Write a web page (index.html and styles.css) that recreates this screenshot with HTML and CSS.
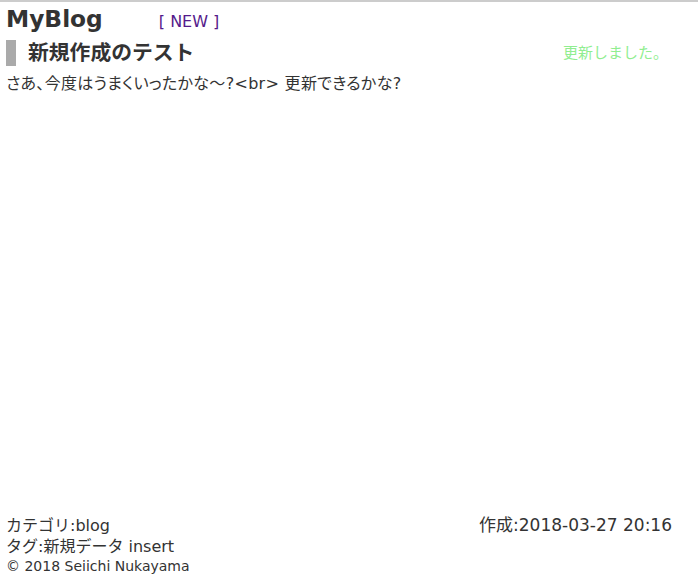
FILE: index.html
```html
<!DOCTYPE html>
<html lang="ja">
<head>
<meta charset="utf-8">
<title>MyBlog</title>
<link rel="stylesheet" href="styles.css">
</head>
<body>
<div class="page">
  <header class="site-header">
    <h1 class="site-title">MyBlog</h1>
    <span class="new-link">[ <a href="#new">NEW</a> ]</span>
  </header>
  <main class="content">
    <div class="post-head">
      <h2 class="post-title">新規作成のテスト</h2>
      <span class="notice">更新しました。</span>
    </div>
    <p class="post-body">さあ、今度はうまくいったかな～?&lt;br&gt; 更新できるかな?</p>
  </main>
  <footer class="post-foot">
    <div class="meta-row">
      <span>カテゴリ:blog</span>
      <span class="created">作成:2018-03-27 20:16</span>
    </div>
    <div class="meta-row">タグ:新規データ insert</div>
    <div class="copy">© 2018 Seiichi Nukayama</div>
  </footer>
</div>
</body>
</html>
```
FILE: styles.css
```css
html, body {
  margin: 0;
  padding: 0;
  height: 100%;
}
body {
  font-family: "DejaVu Sans", "Noto Sans CJK JP", sans-serif;
  font-size: 16px;
  color: #333;
  background: #fff;
  border-top: 2px solid #ccc;
  box-sizing: border-box;
}
.page {
  display: flex;
  flex-direction: column;
  min-height: calc(100vh - 2px);
  padding: 0 6px;
  box-sizing: border-box;
}
.site-header {
  display: flex;
  align-items: baseline;
  gap: 56px;
  height: 38px;
}
.site-title {
  margin: 0;
  font-size: 23.3px;
  font-weight: bold;
  line-height: 34px;
}
.new-link {
  color: #551a8b;
}
.new-link a {
  color: #551a8b;
  text-decoration: none;
}
.post-head {
  display: flex;
  align-items: center;
  justify-content: space-between;
  padding-right: 24px;
}
.post-title {
  margin: 0;
  font-size: 20.8px;
  font-weight: bold;
  line-height: 26px;
  border-left: 10px solid #aaa;
  padding-left: 12px;
}
.notice {
  color: #90ee90;
  font-size: 15px;
  align-self: flex-start;
  padding-top: 1px;
}
.post-body {
  margin: 7px 0 0;
  line-height: 22px;
  font-feature-settings: "palt";
  letter-spacing: 0.3px;
}
.content {
  flex: 1;
}
.post-foot {
  line-height: 21px;
  padding-bottom: 12px;
}
.meta-row {
  display: flex;
  justify-content: space-between;
  align-items: baseline;
  padding-right: 20px;
}
.created {
  font-size: 17px;
  line-height: 21px;
}
.copy {
  font-size: 14px;
  line-height: 18px;
}
```
